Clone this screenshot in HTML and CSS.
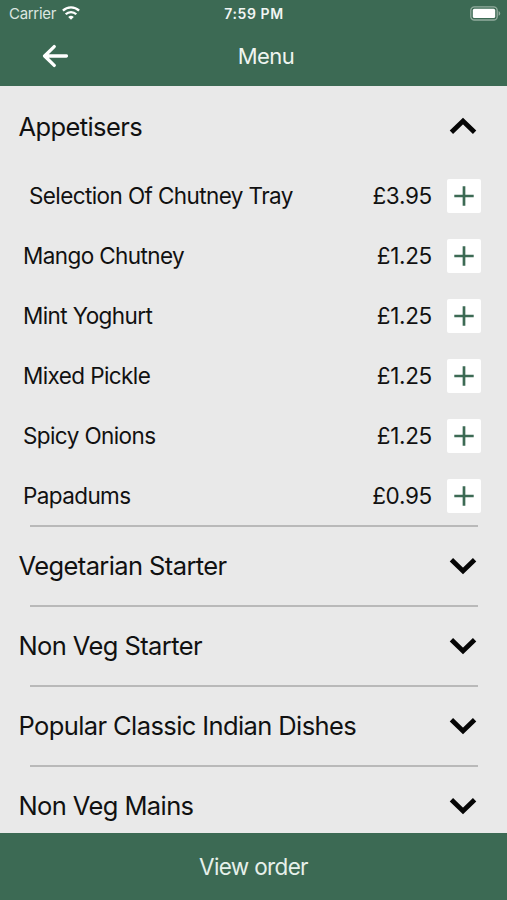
FILE: index.html
```html
<!DOCTYPE html>
<html lang="en">
<head>
<meta charset="utf-8">
<title>Menu</title>
<link rel="stylesheet" href="styles.css">
</head>
<body>
<svg class="defs" aria-hidden="true">
  <symbol id="chevron" viewBox="0 0 28 18"><path d="M2.4 2.7 14 13.9 25.6 2.7" fill="none" stroke="#060606" stroke-width="4.8"/></symbol>
  <symbol id="plus" viewBox="0 0 20 20"><path d="M10 .3v19.4M.3 10h19.4" fill="none" stroke="#3c6a54" stroke-width="2.7"/></symbol>
</svg>
<div class="app">
  <header class="header">
    <div class="status">
      <div class="carrier"><span class="carrier-name">Carrier</span>
        <svg class="wifi" viewBox="0 0 18 14"><g fill="none" stroke="#fff" stroke-width="2.3"><path d="M.9 4.6a11.6 11.6 0 0 1 16.2 0"/><path d="M3.7 8.3a7.5 7.5 0 0 1 10.6 0"/></g><path d="M9 13.8 6.2 11a4 4 0 0 1 5.6 0z" fill="#fff"/></svg>
      </div>
      <div class="time">7:59 PM</div>
      <svg class="battery" viewBox="0 0 31 15"><rect x=".8" y=".8" width="26.4" height="13.2" rx="3.6" fill="none" stroke="#93ad9f" stroke-width="1.3"/><rect x="2.8" y="2.8" width="22.4" height="9.2" rx="1.6" fill="#fff"/><path d="M28.6 5v4.8q1.6-.8 1.6-2.4T28.6 5z" fill="#93ad9f"/></svg>
    </div>
    <div class="nav">
      <svg class="back" viewBox="0 0 26 24"><path d="M12.2 2.6 2.6 12l9.6 9.4M2.8 12H24.4" fill="none" stroke="#fff" stroke-width="3.3" stroke-linejoin="round" stroke-linecap="round"/></svg>
      <h1 class="title">Menu</h1>
    </div>
  </header>
  <main class="list">
    <section class="section">
      <div class="section-head"><h2 class="name open">Appetisers</h2><svg class="chev up"><use href="#chevron"/></svg></div>
      <div class="item first"><span class="label">Selection Of Chutney Tray</span><span class="price">£3.95</span><button class="add" aria-label="Add"><svg><use href="#plus"/></svg></button></div>
      <div class="item"><span class="label">Mango Chutney</span><span class="price">£1.25</span><button class="add" aria-label="Add"><svg><use href="#plus"/></svg></button></div>
      <div class="item"><span class="label">Mint Yoghurt</span><span class="price">£1.25</span><button class="add" aria-label="Add"><svg><use href="#plus"/></svg></button></div>
      <div class="item"><span class="label">Mixed Pickle</span><span class="price">£1.25</span><button class="add" aria-label="Add"><svg><use href="#plus"/></svg></button></div>
      <div class="item"><span class="label">Spicy Onions</span><span class="price">£1.25</span><button class="add" aria-label="Add"><svg><use href="#plus"/></svg></button></div>
      <div class="item"><span class="label">Papadums</span><span class="price">£0.95</span><button class="add" aria-label="Add"><svg><use href="#plus"/></svg></button></div>
    </section>
    <section class="section"><div class="section-head"><h2 class="name">Vegetarian Starter</h2><svg class="chev"><use href="#chevron"/></svg></div></section>
    <section class="section"><div class="section-head"><h2 class="name">Non Veg Starter</h2><svg class="chev"><use href="#chevron"/></svg></div></section>
    <section class="section"><div class="section-head"><h2 class="name">Popular Classic Indian Dishes</h2><svg class="chev"><use href="#chevron"/></svg></div></section>
    <section class="section"><div class="section-head"><h2 class="name">Non Veg Mains</h2><svg class="chev"><use href="#chevron"/></svg></div></section>
  </main>
  <footer class="footer">View order</footer>
</div>
</body>
</html>
```
FILE: styles.css
```css
* { box-sizing: border-box; }
body { margin: 0; font-family: Inter, "Liberation Sans", sans-serif; color: #111; background: #e9e9e9; }
h1, h2 { margin: 0; font-weight: 400; }
.defs { display: none; }
.app { display: flex; flex-direction: column; height: 900px; overflow: hidden; }
.header { flex: none; height: 86px; background: #3c6a54; color: #fff; }
.status { display: grid; grid-template-columns: 1fr auto 1fr; align-items: center; height: 28px; padding: 0 6px 0 9px; }
.carrier { display: flex; align-items: center; gap: 6px; margin-top: -1px; font-size: 15px; letter-spacing: -0.3px; color: #dce6e0; }
.wifi { width: 18px; height: 14px; margin-top: -1px; }
.time { margin: -1px 2px 0 0; font-size: 14px; font-weight: 600; letter-spacing: 0.6px; color: #f1f5f3; }
.battery { width: 31px; height: 15px; justify-self: end; margin-top: -1px; }
.nav { display: grid; grid-template-columns: 1fr auto 1fr; align-items: center; height: 56px; padding: 0 30px 0 42px; }
.back { width: 26px; height: 24px; }
.title { grid-column: 2; margin-left: 13px; font-size: 22px; letter-spacing: -0.5px; color: #eef4f0; }
.list { flex: 1; min-height: 0; overflow: hidden; }
.section-head { display: flex; align-items: center; justify-content: space-between; height: 80px; padding: 0 30px 0 18.5px; }
.section + .section { background: linear-gradient(#b9b9b9, #b9b9b9) 30px 0 / 448px 2px no-repeat; margin-top: -1px; padding-top: 1px; }
.name { padding-bottom: 1px; font-size: 25.5px; letter-spacing: -0.6px; }
.open { padding-bottom: 0; }
.chev { width: 28px; height: 18px; }
.up { transform: scaleY(-1); }
.item { display: flex; align-items: center; height: 60px; padding: 0 26px 0 23px; font-size: 22.5px; letter-spacing: -0.3px; }
.first { padding-left: 29px; }
.label { flex: 1; padding-bottom: 2px; letter-spacing: -0.6px; }
.price { margin-right: 15px; padding-bottom: 2px; }
.add { display: grid; place-items: center; width: 34px; height: 34px; padding: 0; border: 0; border-radius: 2px; background: #fff; }
.add svg { width: 20px; height: 20px; }
.footer { flex: none; display: flex; align-items: center; justify-content: center; height: 67px; background: #3c6a54; color: #e6f0ea; font-size: 22.5px; letter-spacing: -0.65px; }
```
